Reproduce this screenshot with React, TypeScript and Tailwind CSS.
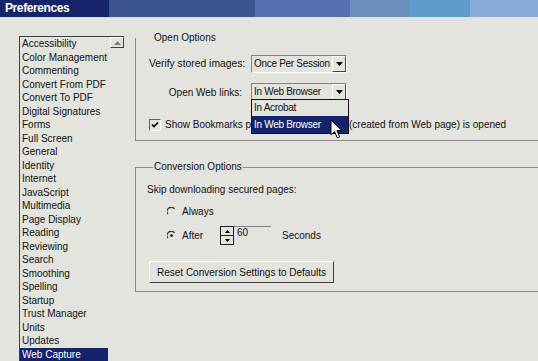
import React from "react";

const items = [
  "Accessibility",
  "Color Management",
  "Commenting",
  "Convert From PDF",
  "Convert To PDF",
  "Digital Signatures",
  "Forms",
  "Full Screen",
  "General",
  "Identity",
  "Internet",
  "JavaScript",
  "Multimedia",
  "Page Display",
  "Reading",
  "Reviewing",
  "Search",
  "Smoothing",
  "Spelling",
  "Startup",
  "Trust Manager",
  "Units",
  "Updates",
  "Web Capture",
];

function ArrowButton() {
  return (
    <div className="w-[14px] h-full flex items-center justify-center border-r border-b border-[#404040] border-l border-l-white border-t border-t-white">
      <svg width="7" height="4" viewBox="0 0 7 4">
        <path d="M0 0h7L3.5 4z" fill="#000" />
      </svg>
    </div>
  );
}

function Select({ value }: { value: string }) {
  return (
    <div className="w-[96px] h-[18px] flex border-t border-l border-[#808080] border-b border-r border-b-white border-r-white bg-[#e2e4dd]">
      <div className="flex-1 pl-[2px] leading-[16px] whitespace-nowrap overflow-hidden tracking-[-0.3px]">{value}</div>
      <ArrowButton />
    </div>
  );
}

function Radio({ checked }: { checked?: boolean }) {
  return (
    <svg width="9" height="9" viewBox="0 0 9 9">
      <path d="M7.5 1.8A4 4 0 0 0 1 7.2" fill="none" stroke="#333" strokeWidth="1.3" />
      {checked && <circle cx="4.5" cy="4.5" r="1.3" fill="#000" />}
    </svg>
  );
}

function Cursor() {
  return (
    <svg width="13" height="20" viewBox="0 0 13 20" className="absolute left-[79px] top-[36px] z-20">
      <path d="M1 1v15l3.5-3.5 2.8 6.3 2.4-1-2.8-6.2h5z" fill="#fff" stroke="#000" strokeWidth="1" />
    </svg>
  );
}

export default function App() {
  return (
    <div
      className="w-[538px] h-[361px] overflow-hidden bg-[#e2e4dd] text-[10px] text-[#111] flex flex-col"
      style={{ fontFamily: '"Liberation Sans", Arial, sans-serif' }}
    >
      <div className="h-[17px] flex shrink-0">
        <div className="w-[109px] bg-[#15246b] text-white font-bold text-[12px] tracking-[-0.4px] pl-[5px] leading-[17px]">
          Preferences
        </div>
        <div className="w-[146px] bg-[#3b5590]" />
        <div className="w-[95px] bg-[#5570b0]" />
        <div className="w-[60px] bg-[#6a8fbb]" />
        <div className="w-[60px] bg-[#5f9ccc]" />
        <div className="flex-1 bg-[#88aad4]" />
      </div>

      <div className="flex flex-1">
        {/* category list */}
        <div className="ml-[19px] mt-[19px] w-[105px] flex flex-col border-l border-t border-[#404040]">
          <div className="flex">
            <div className="flex-1 flex flex-col">
              {items.map((it, i) => (
                <div
                  key={it}
                  className={
                    "h-[13.5px] leading-[13.5px] pl-[2px] whitespace-nowrap w-[88px] " +
                    (i === items.length - 1 ? "bg-[#14246c] text-white" : "")
                  }
                >
                  {it}
                </div>
              ))}
            </div>
            <div className="w-[14px] h-[11px] flex items-center justify-center border-r border-b border-[#404040] border-l border-l-white border-t border-t-white">
              <svg width="7" height="4" viewBox="0 0 7 4">
                <path d="M0 4h7L3.5 0z" fill="#808080" />
              </svg>
            </div>
          </div>
        </div>

        {/* right pane */}
        <div className="ml-[11px] flex-1 flex flex-col">
          {/* Open Options */}
          <div className="relative mt-[21px] h-[103px] border-l border-b border-[#8a8a8a]">
            <div className="absolute left-[17px] top-[-6px] px-[1px] bg-[#e2e4dd] leading-[11px]">Open Options</div>
            <div className="pl-[13px] pt-[17px] flex items-center">
              <div className="w-[102px] whitespace-nowrap text-[10.3px]">Verify stored images:</div>
              <Select value="Once Per Session" />
            </div>
            <div className="relative pt-[10px] flex items-center">
              <div className="w-[115px] pr-[9px] text-right whitespace-nowrap">Open Web links:</div>
              <div className="relative">
                <Select value="In Web Browser" />
                <div className="absolute left-0 top-[16px] w-[98px] border border-[#200818] bg-[#e2e4dd] z-10">
                  <div className="h-[16px] leading-[16px] pl-[2px] tracking-[-0.3px]">In Acrobat</div>
                  <div className="h-[17px] leading-[17px] pl-[2px] bg-[#14246c] text-white tracking-[-0.3px]">In Web Browser</div>
                </div>
                <Cursor />
              </div>
            </div>
            <div className="pl-[13px] pt-[16px] flex items-center">
              <div className="w-[12px] h-[12px] border-t border-l border-[#606060] border-b border-r border-b-white border-r-white flex items-center justify-center">
                <svg width="8" height="8" viewBox="0 0 8 8">
                  <path d="M1 3.5l2 2L7 1.5" fill="none" stroke="#000" strokeWidth="1.6" />
                </svg>
              </div>
              <div className="ml-[4px] w-[184px] overflow-hidden whitespace-nowrap">Show Bookmarks panel when PDF file </div>
              <div className="whitespace-nowrap">(created from Web page) is opened</div>
            </div>
          </div>

          {/* Conversion Options */}
          <div className="relative mt-[26px] h-[125px] border-l border-t border-b border-[#8a8a8a]">
            <div className="absolute left-[17px] top-[-7px] px-[1px] bg-[#e2e4dd] leading-[12px]">Conversion Options</div>
            <div className="pl-[11px] pt-[16px] leading-[12px] whitespace-nowrap">Skip downloading secured pages:</div>
            <div className="pl-[31px] pt-[8px] flex items-center">
              <Radio />
              <span className="ml-[6px]">Always</span>
            </div>
            <div className="pl-[31px] pt-[7px] flex items-center">
              <Radio checked />
              <span className="ml-[6px] w-[38px]">After</span>
              <div className="flex items-start">
                <div className="w-[14px] h-[19px] flex flex-col border border-[#202020]">
                  <div className="flex-1 flex items-center justify-center border-b border-[#202020]">
                    <svg width="5" height="3" viewBox="0 0 5 3">
                      <path d="M0 3h5L2.5 0z" fill="#000" />
                    </svg>
                  </div>
                  <div className="flex-1 flex items-center justify-center">
                    <svg width="5" height="3" viewBox="0 0 5 3">
                      <path d="M0 0h5L2.5 3z" fill="#000" />
                    </svg>
                  </div>
                </div>
                <div className="w-[37px] h-[19px] border-t border-[#808080] pl-[3px] leading-[12px]">60</div>
              </div>
              <span className="ml-[11px]">Seconds</span>
            </div>
            <div className="pl-[13px] pt-[16px]">
              <div className="w-[185px] h-[22px] flex items-center justify-center border-t border-l border-white border-b border-r border-b-[#404040] border-r-[#404040] whitespace-nowrap">
                Reset Conversion Settings to Defaults
              </div>
            </div>
          </div>
        </div>
      </div>
    </div>
  );
}
